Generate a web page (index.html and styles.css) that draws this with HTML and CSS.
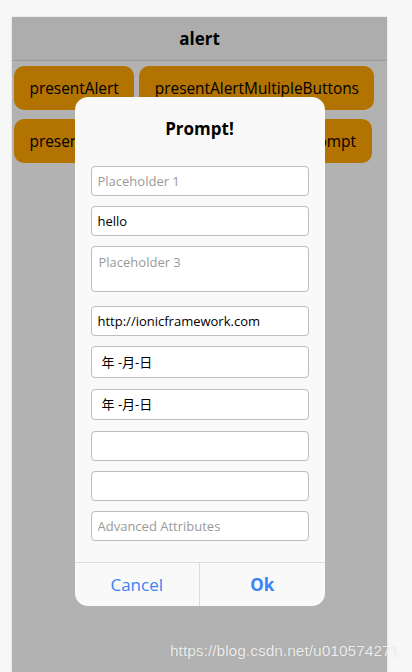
FILE: index.html
```html
<!DOCTYPE html>
<html lang="zh">
<head>
  <meta charset="UTF-8">
  <title>alert</title>
  <meta name="viewport" content="width=device-width, initial-scale=1.0">
  <link rel="stylesheet" href="styles.css">
</head>
<body>

  <div class="phone">
    <div class="toolbar">alert</div>

    <div class="buttons">
      <button class="btn">presentAlert</button>
      <button class="btn">presentAlertMultipleButtons</button>
      <button class="btn">presentAlertConfirm</button>
      <button class="btn">presentAlertPrompt</button>
    </div>

    <div class="backdrop">
      <div class="alert">
        <h2 class="alert-title">Prompt!</h2>

        <div class="alert-inputs">
          <input class="field" type="text" placeholder="Placeholder 1">
          <input class="field" type="text" value="hello">
          <textarea class="field area" placeholder="Placeholder 3"></textarea>
          <input class="field url" type="text" value="http://ionicframework.com">
          <div class="field date">年 -月-日</div>
          <div class="field date">年 -月-日</div>
          <input class="field" type="text">
          <input class="field" type="text">
          <input class="field" type="text" placeholder="Advanced Attributes">
        </div>

        <div class="alert-buttons">
          <button class="alert-btn">Cancel</button>
          <button class="alert-btn strong">Ok</button>
        </div>
      </div>
    </div>
  </div>

  <div class="watermark">https://blog.csdn.net/u010574271</div>

</body>
</html>
```

FILE: styles.css
```css
html, body {
  height: 672px;
  overflow: hidden;
}

body {
  margin: 0;
  background-color: #f7f7f7;
  font-family: "Open Sans", "Noto Sans CJK SC", sans-serif;
  position: relative;
}

.phone {
  position: relative;
  margin: 17px 0 0 12px;
  width: 375px;
  height: 655px;
  background-color: #ffffff;
  box-shadow: 0 0 2px rgba(0, 0, 0, 0.15);
}

.toolbar {
  height: 43px;
  line-height: 44px;
  text-align: center;
  font-size: 17px;
  font-weight: bold;
  color: #000;
  background-color: #f8f8f8;
  border-bottom: 1px solid #dddddd;
}

.buttons {
  display: flex;
  flex-wrap: wrap;
  gap: 9px 5px;
  padding: 5px 2px;
}

.btn {
  height: 44px;
  padding: 0 15.5px;
  font-family: inherit;
  font-size: 15.4px;
  color: #000;
  background-color: #ffa500;
  border: none;
  border-radius: 10px;
}

.backdrop {
  position: absolute;
  inset: 0;
  background-color: rgba(0, 0, 0, 0.3);
  display: flex;
  justify-content: center;
  align-items: flex-start;
  padding-top: 80px;
}

.alert {
  width: 250px;
  background-color: #f9f9f9;
  border-radius: 13px;
  overflow: hidden;
}

.alert-title {
  margin: 0;
  padding: 20px 0 0;
  height: 49px;
  text-align: center;
  font-size: 17px;
  font-weight: bold;
  color: #000;
}

.alert-inputs {
  display: flex;
  flex-direction: column;
  padding: 0 16px 21px;
}

.field {
  box-sizing: border-box;
  height: 30px;
  margin-bottom: 10px;
  padding: 0 6px;
  font-family: inherit;
  font-size: 13px;
  color: #000;
  background-color: #fff;
  border: 1px solid #bdbdbd;
  border-radius: 4px;
  outline: none;
}

.field::placeholder {
  color: #9a9a9a;
}

.area {
  height: 46px;
  padding: 6px 7px;
  resize: none;
  margin-bottom: 14px;
}

.date {
  height: 32px;
  line-height: 30px;
  padding: 0 10px;
  margin-bottom: 11px;
}

.date + .date {
  height: 31px;
  line-height: 29px;
}

.field:last-child {
  margin-bottom: 0;
}

.alert-buttons {
  display: flex;
  border-top: 1px solid #dcdcdc;
}

.alert-btn {
  flex: 1;
  height: 43px;
  font-family: inherit;
  font-size: 17px;
  color: #3b82f5;
  background: none;
  border: none;
}

.alert-btn + .alert-btn {
  border-left: 1px solid #dcdcdc;
}

.strong {
  font-weight: bold;
}

.watermark {
  position: absolute;
  left: 170px;
  top: 642px;
  font-family: "Liberation Sans", Arial, sans-serif;
  font-size: 15.5px;
  color: rgba(255, 255, 255, 0.85);
  text-shadow: 0 0 1px rgba(0, 0, 0, 0.2);
  white-space: nowrap;
}
```
